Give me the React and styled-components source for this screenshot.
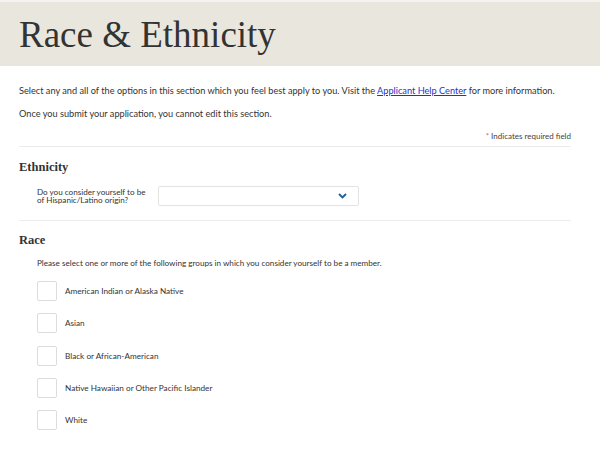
import React from "react";
import styled, { createGlobalStyle } from "styled-components";

const GlobalStyle = createGlobalStyle`
  body {
    margin: 0;
    background: #ffffff;
    font-family: Lato, "Open Sans", sans-serif;
    color: #333;
  }
`;

const races = [
  "American Indian or Alaska Native",
  "Asian",
  "Black or African-American",
  "Native Hawaiian or Other Pacific Islander",
  "White",
];

function App() {
  return (
    <Page>
      <GlobalStyle />
      <Header>
        <Title>Race &amp; Ethnicity</Title>
      </Header>
      <Body>
        <Intro>
          Select any and all of the options in this section which you feel best apply to you. Visit the{" "}
          <HelpLink href="#">Applicant Help Center</HelpLink> for more information.
        </Intro>
        <Intro>Once you submit your application, you cannot edit this section.</Intro>
        <Required>
          <Star>*</Star> Indicates required field
        </Required>
        <Section>
          <SectionTitle>Ethnicity</SectionTitle>
          <QuestionRow>
            <Label>
              Do you consider yourself to be
              <br />
              of Hispanic/Latino origin?
            </Label>
            <Select>
              <svg width="9" height="6" viewBox="0 0 9 6">
                <path d="M1 1l3.5 3.5L8 1" fill="none" stroke="#1f5f9e" strokeWidth="1.8" />
              </svg>
            </Select>
          </QuestionRow>
        </Section>
        <Section last>
          <SectionTitle>Race</SectionTitle>
          <Hint>Please select one or more of the following groups in which you consider yourself to be a member.</Hint>
          <List>
            {races.map((r) => (
              <Option key={r}>
                <Box />
                <span>{r}</span>
              </Option>
            ))}
          </List>
        </Section>
      </Body>
    </Page>
  );
}

export default App;

const Page = styled.div`
  width: 600px;
  height: 454px;
  overflow: hidden;
`;

const Header = styled.div`
  background: #e9e7dd;
  border-top: 2px solid #f3f2ee;
  height: 64px;
  padding-left: 19px;
  display: flex;
  align-items: center;
`;

const Title = styled.h1`
  margin: 0;
  font-family: "Liberation Serif", "DejaVu Serif", serif;
  font-weight: normal;
  font-size: 37px;
  color: #333;
`;

const Body = styled.div`
  padding: 19px 29px 0 19px;
`;

const Intro = styled.p`
  margin: 0 0 11px;
  font-size: 9.2px;
  line-height: 12px;
  color: #333;
`;

const HelpLink = styled.a`
  color: #2233cc;
  text-decoration: underline;
`;

const Required = styled.div`
  text-align: right;
  font-size: 8px;
  color: #444;
  margin-top: 6px;
  padding-bottom: 5px;
`;

const Star = styled.span`
  color: #d9607e;
`;

const Section = styled.div`
  border-top: 1px solid #ececec;
  padding: ${(p) => (p.last ? 12 : 13)}px 0 ${(p) => (p.last ? 0 : 14)}px;
`;

const SectionTitle = styled.h2`
  margin: 0 0 11px;
  font-family: "Liberation Serif", serif;
  font-size: 12.5px;
  font-weight: bold;
  color: #333;
`;

const QuestionRow = styled.div`
  display: flex;
  align-items: center;
  padding-left: 18px;
`;

const Label = styled.div`
  width: 121px;
  font-size: 8.1px;
  line-height: 8.5px;
  color: #333;
`;

const Select = styled.div`
  width: 188px;
  height: 18px;
  border: 1px solid #e3e3e3;
  border-radius: 2px;
  display: flex;
  align-items: center;
  justify-content: flex-end;
  padding-right: 11px;
  box-sizing: content-box;
`;

const Hint = styled.div`
  padding-left: 18px;
  font-size: 8.15px;
  color: #333;
  margin: -1px 0 13px;
`;

const List = styled.div`
  display: flex;
  flex-direction: column;
  gap: 12.3px;
  padding-left: 18px;
`;

const Option = styled.label`
  display: flex;
  align-items: center;
  gap: 8px;
  font-size: 8.2px;
  color: #333;
`;

const Box = styled.span`
  width: 18px;
  height: 18px;
  border: 1px solid #dcdcdc;
  border-radius: 2px;
  background: #fff;
`;
